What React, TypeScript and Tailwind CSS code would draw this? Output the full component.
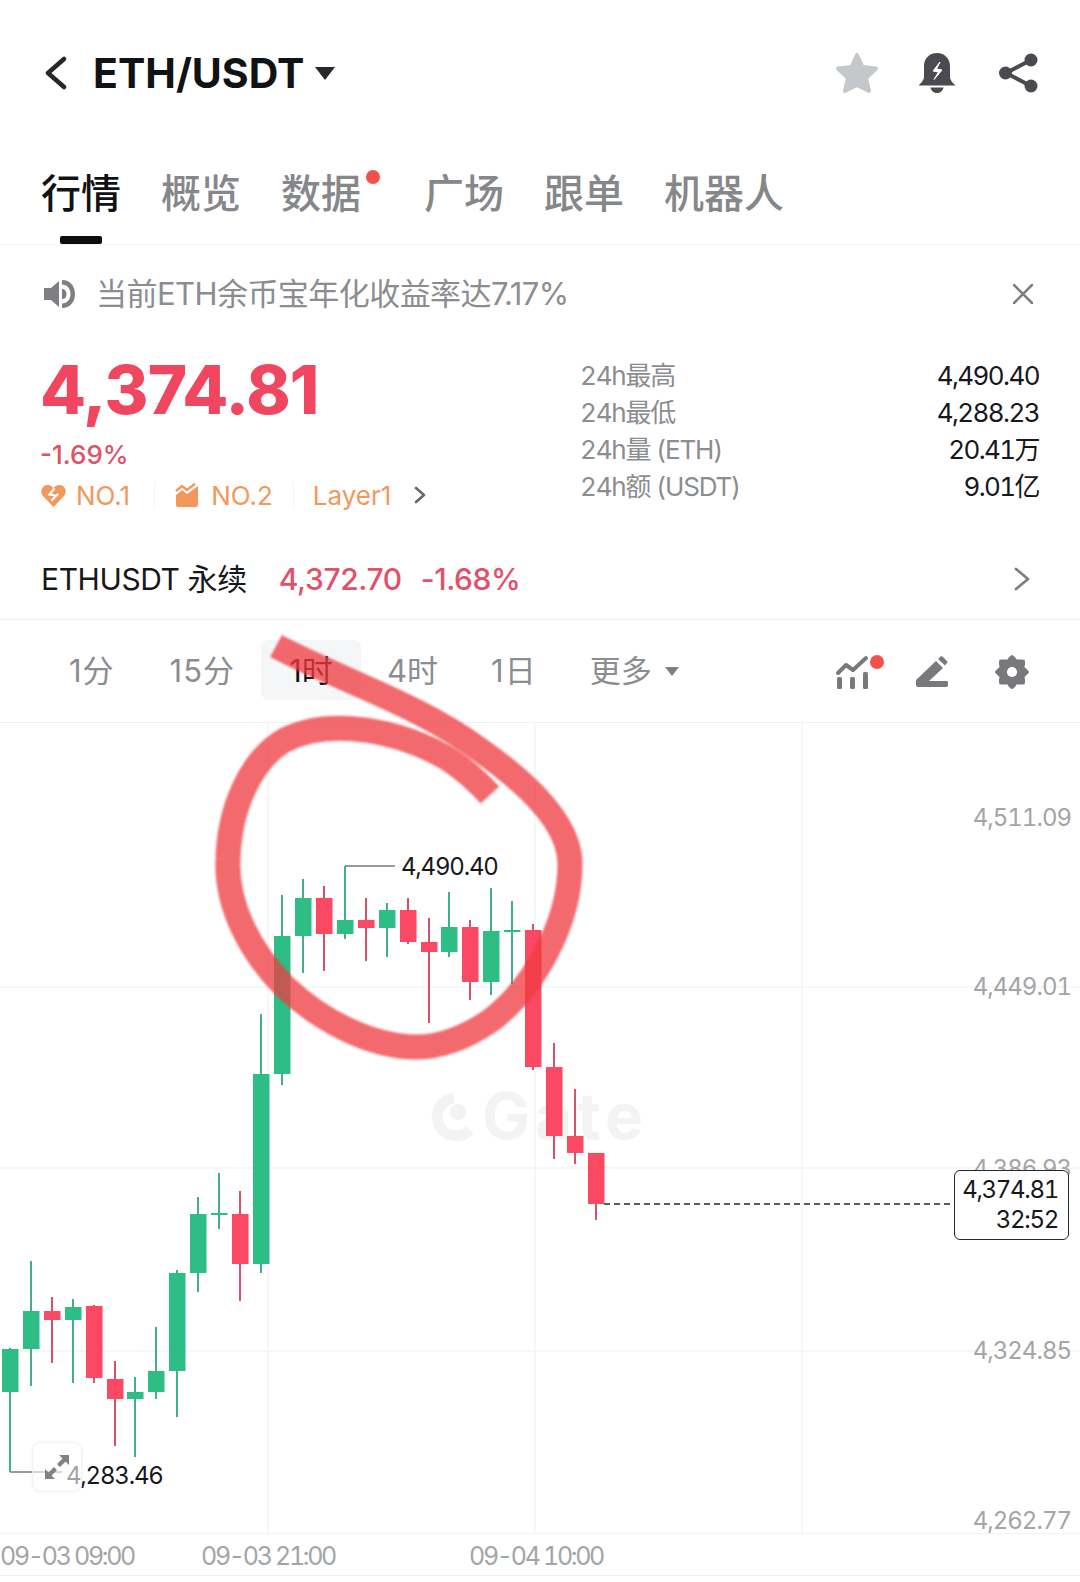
const green = '#2ebd85';
const red = '#fb4863';
const greenWick = '#45ad8a';
const redWick = '#d9506c';

// [x, wickTop, wickBottom, bodyTop, bodyBottom, isUp]
const candles: [number, number, number, number, number, boolean][] = [
  [10, 1348, 1472, 1349, 1392, true],
  [31, 1261, 1386, 1311, 1349, true],
  [52, 1297, 1363, 1311, 1320, false],
  [73, 1299, 1383, 1307, 1320, true],
  [94, 1305, 1383, 1306, 1378, false],
  [115, 1361, 1446, 1379, 1399, false],
  [135, 1377, 1457, 1392, 1399, true],
  [156, 1327, 1399, 1371, 1392, true],
  [177, 1270, 1417, 1273, 1371, true],
  [198, 1197, 1292, 1214, 1273, true],
  [219, 1173, 1229, 1213, 1215, true],
  [240, 1191, 1301, 1214, 1264, false],
  [261, 1014, 1273, 1074, 1264, true],
  [282, 895, 1085, 936, 1074, true],
  [303, 879, 973, 898, 936, true],
  [324, 886, 971, 898, 934, false],
  [345, 866, 939, 920, 934, true],
  [366, 898, 961, 920, 928, false],
  [387, 903, 957, 910, 928, true],
  [408, 898, 944, 910, 942, false],
  [429, 918, 1023, 942, 952, false],
  [449, 892, 957, 927, 952, true],
  [470, 920, 1000, 927, 982, false],
  [491, 888, 995, 931, 982, true],
  [512, 901, 984, 930, 932, true],
  [533, 924, 1070, 930, 1067, false],
  [554, 1043, 1159, 1067, 1136, false],
  [575, 1089, 1164, 1136, 1153, false],
  [596, 1153, 1220, 1153, 1204, false],
];

function BackIcon() {
  return (
    <svg width="24" height="34" viewBox="0 0 24 34" fill="none" stroke="#26272b" strokeWidth="4.5" strokeLinecap="round" strokeLinejoin="round">
      <path d="M20 3 L4 17 L20 31" />
    </svg>
  );
}

function StarIcon() {
  return (
    <svg width="44" height="42" viewBox="0 0 44 42" fill="#c4c8ca" stroke="#c4c8ca" strokeWidth="4" strokeLinejoin="round">
      <path d="M22 3 L27.5 15 L41 16.5 L31 26 L34 39 L22 33 L10 39 L13 26 L3 16.5 L16.5 15 Z" />
    </svg>
  );
}

function BellIcon() {
  return (
    <svg width="38" height="40" viewBox="0 0 38 40">
      <path d="M19 0 C27 0 32 6 32 13 L32 24 C32 27 35 30 37 32 L37 32.5 L1 32.5 L1 32 C3 30 6 27 6 24 L6 13 C6 6 11 0 19 0 Z" fill="#4a4b50" />
      <path d="M12.5 34.5 L25.5 34.5 C25 38 22 40 19 40 C16 40 13 38 12.5 34.5 Z" fill="#4a4b50" />
      <path d="M22 9 L15 18 L20.5 19 L16 26.5 L24 17 L18.5 16 Z" fill="#fff" stroke="#fff" strokeWidth="1" strokeLinejoin="round" />
    </svg>
  );
}

function ShareIcon() {
  return (
    <svg width="40" height="40" viewBox="0 0 40 40" fill="#4a4b50" stroke="#4a4b50">
      <path d="M32 7 L7 20 L32 33" fill="none" strokeWidth="4" />
      <circle cx="32" cy="7" r="6.5" stroke="none" />
      <circle cx="6.5" cy="20" r="6.5" stroke="none" />
      <circle cx="32" cy="33" r="6.5" stroke="none" />
    </svg>
  );
}

function SpeakerIcon() {
  return (
    <svg width="32" height="28" viewBox="0 0 32 28" fill="#7d7f82">
      <path d="M0 8 L7 8 L15 1 L15 27 L7 20 L0 20 Z" />
      <path d="M18 0 C26 0 31 6 31 14 C31 22 26 28 18 28 L18 23.5 C23 23.5 26.5 19.5 26.5 14 C26.5 8.5 23 4.5 18 4.5 Z" />
      <path d="M18 9 C21 9 22.5 11 22.5 14 C22.5 17 21 19 18 19 Z" />
    </svg>
  );
}

function HeartIcon() {
  return (
    <svg width="25" height="23" viewBox="0 0 25 23">
      <path d="M12.5 23 L2 12 C-1 8.500 0 2 6 1 C9 0.500 11 2 12.500 4 C14 2 16 0.500 19 1 C25 2 26 8.500 23 12 Z" fill="#f3985c" />
      <path d="M13 5 L8.500 10.500 L14 11.500 M11 16 L16.500 10.500" stroke="#fff" strokeWidth="2.2" fill="none" strokeLinecap="round" />
    </svg>
  );
}

function TrendIcon() {
  return (
    <svg width="24" height="24" viewBox="0 0 24 24" fill="#f3985c">
      <path d="M1 12 L7 7 L12 11 L23 3 L23 22 C23 23 22 24 21 24 L3 24 C2 24 1 23 1 22 Z" />
      <path d="M1 8 L7 3 L12 7 L20 0.800" fill="none" stroke="#f3985c" strokeWidth="2.4" />
    </svg>
  );
}

function IndicatorIcon() {
  return (
    <svg width="48" height="34" viewBox="0 0 48 34" fill="none">
      <path d="M2 18 L10 10 L17 15 L30 3" stroke="#77797c" strokeWidth="4" strokeLinecap="round" strokeLinejoin="round" />
      <rect x="1" y="22" width="5" height="12" rx="1.500" fill="#77797c" />
      <rect x="14" y="22" width="5" height="12" rx="1.500" fill="#77797c" />
      <rect x="27" y="17" width="5" height="17" rx="1.500" fill="#77797c" />
      <circle cx="41" cy="7" r="7" fill="#f4504a" />
    </svg>
  );
}

function PencilIcon() {
  return (
    <svg width="32" height="31" viewBox="0 0 32 31" fill="#77797c">
      <path d="M0 24 L20 5 L27 12 L13 25 L31 25 C32 25 32 26 32 27.500 L32 29 C32 30 31 31 30 31 L2 31 C1 31 0 30 0 29 Z" />
      <path d="M22 3 L24.500 0.500 C25 0 26 0 26.500 0.500 L31 5 C31.500 5.500 31.500 6.500 31 7 L29 9.500 Z" />
    </svg>
  );
}

function GearIcon() {
  return (
    <svg width="34" height="34" viewBox="1 1 30 30">
      <path d="M16 1 C17 1 19 3 20 5 C23 5 26 4.500 27 5.500 C28 7 27.500 9.500 27 11.500 C28.500 13 31 15 31 16 C31 17 28.500 19 27 20.500 C27.500 22.500 28 25 27 26.500 C26 27.500 23 27 20 27 C19 29 17 31 16 31 C15 31 13 29 12 27 C9 27 6 27.500 5 26.500 C4 25 4.500 22.500 5 20.500 C3.500 19 1 17 1 16 C1 15 3.500 13 5 11.500 C4.500 9.500 4 7 5 5.500 C6 4.500 9 5 12 5 C13 3 15 1 16 1 Z" fill="#77797c" />
      <circle cx="16" cy="16" r="4.500" fill="#fff" />
    </svg>
  );
}

function ExpandIcon() {
  return (
    <svg width="24" height="24" viewBox="0 0 24 24" fill="#7f8184">
      <path d="M24 0 L24 10 L20.500 6.500 L15 12 L12 9 L17.500 3.500 L14 0 Z" />
      <path d="M0 24 L0 14 L3.500 17.500 L9 12 L12 15 L6.500 20.500 L10 24 Z" />
    </svg>
  );
}

function GateLogo() {
  return (
    <svg width="48" height="50" viewBox="0 0 48 50" fill="none" className="absolute left-[430px] top-[369px]">
      <path d="M40 38 A19 19 0 1 1 24 6" stroke="#f2f4f4" strokeWidth="11" />
      <circle cx="28" cy="20" r="8" fill="#f2f4f4" />
    </svg>
  );
}

function Annotation() {
  return (
    <svg width="1080" height="1582" viewBox="0 0 1080 1582" fill="none" className="absolute left-0 top-0 pointer-events-none blur-[1px]">
      <path
        d="M276 646 C340 680 420 705 480 750 C530 785 570 825 570 864 C570 922 535 987 490 1021 C465 1038 440 1047 417 1047"
        stroke="#ef3b40"
        strokeOpacity="0.76"
        strokeWidth="25"
      />
      <path
        d="M417 1047 C370 1047 320 1020 285 987 C250 952 226 905 228 860 C229 810 250 760 285 740 C330 717 400 730 450 760 C465 770 478 782 490 795"
        stroke="#ef3b40"
        strokeOpacity="0.76"
        strokeWidth="25"
      />
    </svg>
  );
}

function Chart() {
  return (
    <div className="relative h-[811px] border-b border-[#f2f3f4] tabular-nums">
      <GateLogo />
      <span className="absolute left-[482px] top-[356px] text-[64px] leading-[74px] tracking-[5px] font-bold text-[#f2f4f4]">Gate</span>

      <svg width="1080" height="811" viewBox="0 723 1080 811" className="absolute left-0 top-0">
        {[268, 535, 802].map((x) => (
          <line key={x} x1={x} x2={x} y1="723" y2="1534" stroke="#f3f4f5" strokeWidth="1.500" />
        ))}
        {[987, 1168, 1351].map((y) => (
          <line key={y} x1="0" x2="1080" y1={y} y2={y} stroke="#f3f4f5" strokeWidth="1.500" />
        ))}
        <path d="M10 1472 L62 1472" stroke="#76787b" strokeWidth="1.500" fill="none" />
        <path d="M345 866 L395 866" stroke="#76787b" strokeWidth="1.500" fill="none" />
        <line x1="604" x2="950" y1="1204" y2="1204" stroke="#26272b" strokeWidth="1.500" strokeDasharray="6 4" />
        {candles.map(([x, wt, wb, bt, bb, up]) => (
          <g key={x}>
            <line x1={x} x2={x} y1={wt} y2={wb} stroke={up ? greenWick : redWick} strokeWidth="2" />
            <rect x={x - 8} y={bt} width="16.500" height={bb - bt} fill={up ? green : red} />
          </g>
        ))}
      </svg>

      <span className="absolute left-[401px] top-[128px] text-[24px] leading-[32px] tracking-[-1.2px] text-[#17181b]">4,490.40</span>
      <span className="absolute left-[66px] top-[737px] text-[24px] leading-[32px] tracking-[-1.2px] text-[#17181b]">4,283.46</span>

      <span className="absolute right-[9px] top-[79px] text-[24px] leading-[32px] tracking-[-1px] text-[#a3a5a7]">4,511.09</span>
      <span className="absolute right-[9px] top-[248px] text-[24px] leading-[32px] tracking-[-1px] text-[#a3a5a7]">4,449.01</span>
      <span className="absolute right-[9px] top-[430px] text-[24px] leading-[32px] tracking-[-1px] text-[#a3a5a7]">4,386.93</span>
      <span className="absolute right-[9px] top-[612px] text-[24px] leading-[32px] tracking-[-1px] text-[#a3a5a7]">4,324.85</span>
      <span className="absolute right-[9px] top-[782px] text-[24px] leading-[32px] tracking-[-1px] text-[#a3a5a7]">4,262.77</span>

      <div className="absolute left-[954px] top-[447px] flex h-[70px] w-[115px] flex-col items-end justify-center rounded-[6px] border border-[#26272b] bg-white pr-[10px] text-[24px] leading-[30px] tracking-[-1.3px] text-[#17181b]">
        <span>4,374.81</span>
        <span>32:52</span>
      </div>

      <div className="absolute left-[32px] top-[719px] flex h-[50px] w-[50px] items-center justify-center rounded-[9px] border border-[#f0f1f2] bg-white/60 shadow-[0_0_4px_rgba(0,0,0,0.05)]">
        <ExpandIcon />
      </div>
    </div>
  );
}

export default function App() {
  return (
    <div className="relative h-[1582px] w-[1080px] overflow-hidden bg-white font-['Inter','Noto_Sans_CJK_SC',sans-serif]">
      <header className="flex h-[146px] items-center pl-[44px] pr-[41px]">
        <BackIcon />
        <h1 className="ml-[25px] text-[41px] leading-none font-bold text-[#111214]">ETH/USDT</h1>
        <span className="ml-[11px] h-0 w-0 border-x-[10px] border-t-[13px] border-x-transparent border-t-[#26272b]" />
        <div className="ml-auto flex items-center">
          <StarIcon />
          <div className="ml-[39px]"><BellIcon /></div>
          <div className="ml-[43px]"><ShareIcon /></div>
        </div>
      </header>

      <nav className="flex h-[99px] items-start gap-[40px] border-b border-[#f2f3f4] pl-[41px] pt-[25px] text-[40px] leading-[46px] font-medium text-[#85878a]">
        <span className="relative w-[80px] text-[#111214]">
          行情
          <span className="absolute left-[19px] top-[65px] h-[8px] w-[42px] rounded-[2px] bg-[#0c0d0f]" />
        </span>
        <span className="w-[80px]">概览</span>
        <span className="relative mr-[23px] w-[80px]">
          数据
          <span className="absolute left-[85px] top-[-1px] h-[14px] w-[14px] rounded-full bg-[#f4504a]" />
        </span>
        <span className="w-[80px]">广场</span>
        <span className="w-[80px]">跟单</span>
        <span>机器人</span>
      </nav>

      <div className="flex h-[95px] items-center pl-[44px] pr-[47px] pt-[2px] text-[#8b8d90]">
        <SpeakerIcon />
        <span className="ml-[20px] text-[31px] leading-none tracking-[-0.55px]">当前ETH余币宝年化收益率达7.17%</span>
        <svg width="20" height="20" viewBox="0 0 20 20" className="ml-auto" stroke="#7d7f82" strokeWidth="2.600" strokeLinecap="round">
          <path d="M1 1 L19 19 M19 1 L1 19" />
        </svg>
      </div>

      <section className="flex h-[195px] pl-[41px] pr-[41px]">
        <div className="w-[539px]">
          <div className="-ml-[1px] pt-[17px] text-[67px] leading-[66px] font-extrabold tracking-[-0.8px] text-[#f0465f]">4,374.81</div>
          <div className="-ml-[1px] mt-[17px] text-[26px] leading-[30px] font-medium text-[#e2506a]">-1.69%</div>
          <div className="mt-[11px] flex h-[28px] items-center text-[26px] text-[#f3985c]">
            <HeartIcon />
            <span className="ml-[10px]">NO.1</span>
            <span className="ml-[24px] h-[26px] w-px bg-[#f3f4f5]" />
            <span className="ml-[20px]"><TrendIcon /></span>
            <span className="ml-[12px]">NO.2</span>
            <span className="ml-[20px] h-[26px] w-px bg-[#f3f4f5]" />
            <span className="ml-[19px]">Layer1</span>
            <svg width="13" height="18" viewBox="0 0 13 18" fill="none" stroke="#66686b" strokeWidth="2.600" className="ml-[23px]" strokeLinecap="round" strokeLinejoin="round">
              <path d="M2 2 L10 9 L2 16" />
            </svg>
          </div>
        </div>
        <div className="flex-1 pt-[17px] text-[26px] leading-[37px] tabular-nums">
          {[
            ['24h最高', '4,490.40'],
            ['24h最低', '4,288.23'],
            ['24h量 (ETH)', '20.41万'],
            ['24h额 (USDT)', '9.01亿'],
          ].map(([k, v]) => (
            <div key={k} className="flex justify-between">
              <span className="tracking-[-1.2px] text-[#8b8d90]">{k}</span>
              <span className="tracking-[-1.6px] text-[#17181b]">{v}</span>
            </div>
          ))}
        </div>
      </section>

      <div className="flex h-[85px] items-center border-b border-[#f0f1f2] pl-[41px] pr-[50px] pt-[3px]">
        <span className="text-[30px] leading-none tracking-[-0.4px] text-[#17181b]">ETHUSDT 永续</span>
        <span className="ml-[32px] text-[30px] leading-none font-medium tracking-[-0.4px] text-[#e2506a]">4,372.70</span>
        <span className="ml-[19px] text-[30px] leading-none font-medium tracking-[-0.4px] text-[#e2506a]">-1.68%</span>
        <svg width="16" height="24" viewBox="0 0 16 24" fill="none" stroke="#7d7f82" strokeWidth="2.800" strokeLinecap="round" strokeLinejoin="round" className="ml-auto">
          <path d="M2 2 L14 12 L2 22" />
        </svg>
      </div>

      <div className="flex h-[103px] items-center border-b border-[#f0f1f2] pt-[1px] text-[31px] text-[#8b8d90]">
        <span className="ml-[69px] tracking-[1px]">1分</span>
        <span className="ml-[55px] tracking-[1px]">15分</span>
        <span className="mb-[4px] ml-[26px] flex h-[60px] w-[100px] items-center justify-center rounded-[8px] bg-[#f4f6f7] pt-[4px] text-[#111214]">1时</span>
        <span className="ml-[26px]">4时</span>
        <span className="ml-[53px] tracking-[1px]">1日</span>
        <span className="ml-[53px]">更多</span>
        <span className="ml-[13px] h-0 w-0 border-x-[7px] border-t-[9px] border-x-transparent border-t-[#7d7f82]" />
        <div className="ml-[157px] flex items-center">
          <IndicatorIcon />
          <div className="ml-[32px]"><PencilIcon /></div>
          <div className="ml-[47px]"><GearIcon /></div>
        </div>
      </div>

      <Chart />

      <div className="relative h-[42px] border-b border-[#f0f1f2] pt-[1px] text-[25px] leading-[42px] tracking-[-2.3px] text-[#a3a5a7] tabular-nums">
        <span className="absolute left-0 top-[1px]">09-03 09:00</span>
        <span className="absolute left-[201px] top-[1px]">09-03 21:00</span>
        <span className="absolute left-[469px] top-[1px]">09-04 10:00</span>
      </div>

      <Annotation />
    </div>
  );
}
